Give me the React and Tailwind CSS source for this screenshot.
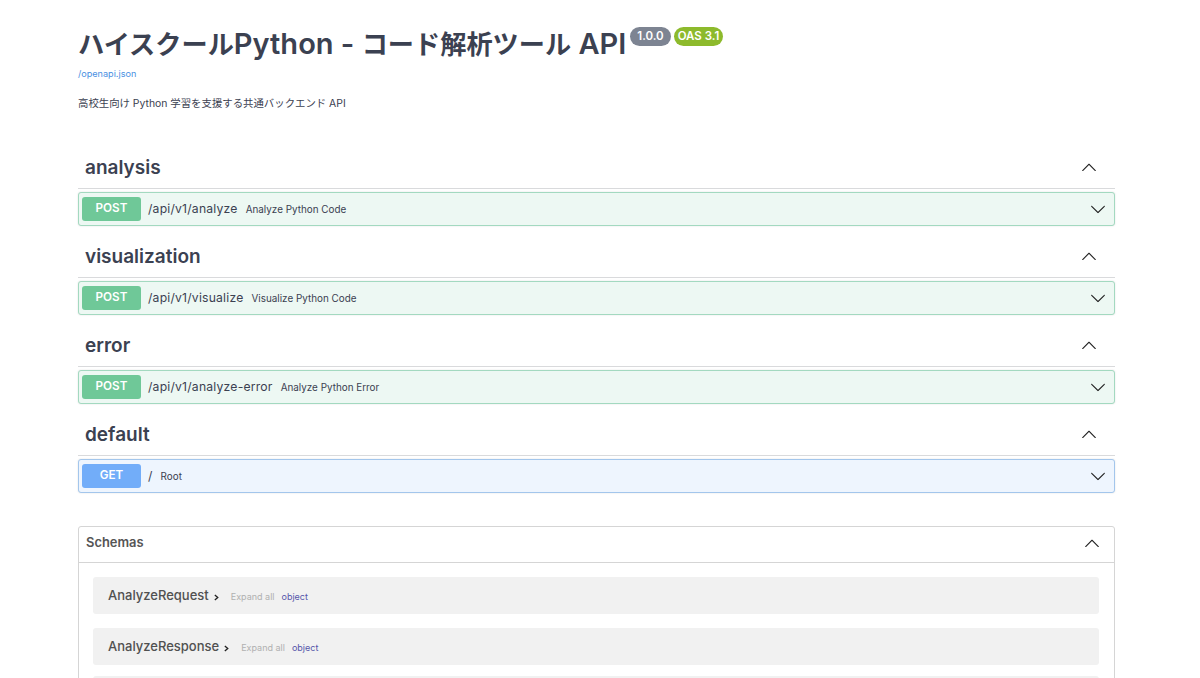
import React from "react";

const ChevronUp = ({ className }) => (
  <svg viewBox="0 0 20 20" className={className} fill="currentColor">
    <path d="M 17.418 14.908 C 17.69 15.18 18.127 15.18 18.399 14.908 C 18.671 14.636 18.671 14.199 18.399 13.927 L 10.49 6.018 C 10.218 5.746 9.782 5.746 9.51 6.018 L 1.601 13.927 C 1.329 14.199 1.329 14.636 1.601 14.908 C 1.873 15.18 2.31 15.18 2.582 14.908 L 10 7.49 Z" />
  </svg>
);

const ChevronDown = ({ className }) => (
  <svg viewBox="0 0 20 20" className={className} fill="currentColor">
    <path d="M 17.418 6.109 C 17.69 5.837 18.127 5.837 18.399 6.109 C 18.671 6.381 18.671 6.818 18.399 7.09 L 10.49 14.999 C 10.218 15.271 9.782 15.271 9.51 14.999 L 1.601 7.09 C 1.329 6.818 1.329 6.381 1.601 6.109 C 1.873 5.837 2.31 5.837 2.582 6.109 L 10 13.527 Z" />
  </svg>
);

const Operation = ({ method, path, summary }) => {
  const isPost = method === "POST";
  return (
    <div
      className={
        "flex items-center h-[34px] mt-[3px] pl-[3px] pr-[8px] rounded-[3px] border shadow-[0_0_2px_rgba(0,0,0,0.12)] " +
        (isPost ? "bg-[#edf8f3] border-[#a3d9c0]" : "bg-[#eef5fe] border-[#a3c6ec]")
      }
    >
      <div
        className={
          "w-[59px] h-[24px] flex items-center justify-center rounded-[3px] text-white font-semibold text-[11.7px] " +
          (isPost ? "bg-[#6fc898]" : "bg-[#72adf9]")
        }
      >
        {method}
      </div>
      <span className="ml-[7px] text-[12.2px] font-normal tracking-[0.2px] text-[#3b4151]">{path}</span>
      <span className="ml-[8px] text-[9.9px] text-[#3b4151]">{summary}</span>
      <ChevronDown className="ml-auto w-[16px] h-[16px] text-[#222]" />
    </div>
  );
};

const Section = ({ title, method, path, summary }) => (
  <section className="mb-[10px]">
    <div className="flex items-center justify-between h-[42px] border-b border-[#d9dadc] pl-[7px] pr-[18px]">
      <h3 className="text-[19px] font-semibold text-[#3b4151]">{title}</h3>
      <ChevronUp className="mb-[1px] w-[16px] h-[16px] text-[#222]" />
    </div>
    <Operation method={method} path={path} summary={summary} />
  </section>
);

const SchemaRow = ({ name }) => (
  <div className="flex items-center h-[37px] pl-[15px] bg-[#f1f1f1] rounded-[3px]">
    <span className="text-[13px] font-medium text-[#505050]">{name}</span>
    <svg viewBox="0 0 6 8" className="ml-[5px] mt-[3px] w-[5px] h-[7px] text-[#222]" fill="none" stroke="currentColor" strokeWidth="1.6">
      <path d="M1 1 L4.5 4 L1 7" />
    </svg>
    <span className="ml-[12px] mt-[1px] text-[9px] text-[#b0b0b0]">Expand all</span>
    <span className="ml-[7px] mt-[1px] text-[9px] text-[#55a]">object</span>
  </div>
);

export default function App() {
  return (
    <div className="h-[678px] overflow-hidden bg-white font-['Inter','Noto_Sans_CJK_JP',sans-serif]">
      <div className="pl-[78px] pr-[85px]">
        <header className="pt-[26px]">
          <div className="flex items-start">
            <h1 className="text-[29px] leading-[36px] font-semibold text-[#3b4151]">
              <span className="text-[26.2px]">ハイスクール</span>Python - <span className="text-[26.2px]">コード解析ツール</span> API
            </h1>
            <span className="ml-[4px] mt-[1px] h-[19px] px-[7px] flex items-center rounded-full bg-[#7d8492] text-white text-[11.5px] font-semibold">
              1.0.0
            </span>
            <span className="ml-[3px] mt-[1px] h-[19px] px-[4px] flex items-center rounded-full bg-[#8dba2c] text-white text-[11.5px] font-semibold">
              OAS 3.1
            </span>
          </div>
          <a className="block mt-[4px] text-[9.1px] text-[#4990e2]">/openapi.json</a>
          <p className="mt-[15px] text-[10.4px] text-[#3b4151]">高校生向け Python 学習を支援する共通バックエンド API</p>
        </header>

        <div className="mt-[36px]">
          <Section title="analysis" method="POST" path="/api/v1/analyze" summary="Analyze Python Code" />
          <Section title="visualization" method="POST" path="/api/v1/visualize" summary="Visualize Python Code" />
          <Section title="error" method="POST" path="/api/v1/analyze-error" summary="Analyze Python Error" />
          <Section title="default" method="GET" path="/" summary="Root" />
        </div>

        <div className="mt-[33px] border border-[#d5d5d5] rounded-[3px]">
          <div className="flex items-center justify-between h-[36px] pb-[4px] pl-[7px] pr-[14px] border-b border-[#d5d5d5]">
            <span className="text-[12.9px] font-semibold text-[#555]">Schemas</span>
            <ChevronUp className="w-[16px] h-[16px] text-[#222]" />
          </div>
          <div className="pt-[14px] pl-[14px] pr-[15px] flex flex-col">
            <SchemaRow name="AnalyzeRequest" />
            <div className="mt-[14px]">
              <SchemaRow name="AnalyzeResponse" />
            </div>
            <div className="mt-[11px] h-[37px] bg-[#f1f1f1] rounded-[3px]" />
          </div>
        </div>
      </div>
    </div>
  );
}
